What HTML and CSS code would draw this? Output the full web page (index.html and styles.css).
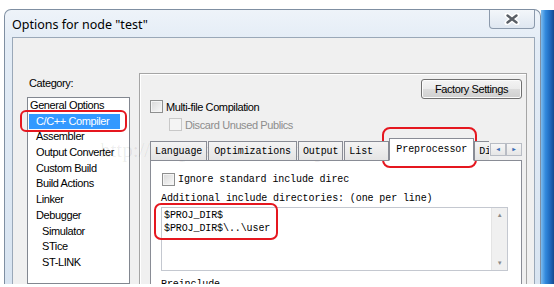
FILE: index.html
```html
<!DOCTYPE html>
<html lang="en">
<head>
    <meta charset="UTF-8">
    <title>Options for node "test"</title>
    <link rel="stylesheet" href="styles.css">
</head>
<body>
    <div class="screen">
        <div class="desktop">
            <div class="window">
                <div class="titlebar">
                    <span class="title">Options for node "test"</span>
                    <div class="close">
                        <svg width="16" height="12" viewBox="0 0 16 12">
                            <path d="M3 2 L13 10 M13 2 L3 10" stroke="#fff" stroke-width="5" stroke-linecap="round"/>
                            <path d="M3.5 2.5 L12.5 9.5 M12.5 2.5 L3.5 9.5" stroke="#5a5f66" stroke-width="2.4" stroke-linecap="round"/>
                        </svg>
                    </div>
                </div>

                <div class="client">
                    <!-- Category tree -->
                    <div class="category">
                        <div class="category-label">Category:</div>
                        <ul class="tree">
                            <li>General Options</li>
                            <li class="lvl1"><span class="selected">C/C++ Compiler</span></li>
                            <li class="lvl1">Assembler</li>
                            <li class="lvl1">Output Converter</li>
                            <li class="lvl1">Custom Build</li>
                            <li class="lvl1">Build Actions</li>
                            <li class="lvl1">Linker</li>
                            <li class="lvl1">Debugger</li>
                            <li class="lvl2">Simulator</li>
                            <li class="lvl2">STice</li>
                            <li class="lvl2">ST-LINK</li>
                        </ul>
                    </div>

                    <!-- Options panel -->
                    <div class="panel">
                        <div class="panel-top">
                            <div class="options">
                                <div class="check"><span class="box"></span>Multi-file Compilation</div>
                                <div class="check check-sub disabled"><span class="box"></span>Discard Unused Publics</div>
                            </div>
                            <div class="button">Factory Settings</div>
                        </div>

                        <div class="tabs">
                            <div class="tab-track">
                                <div class="tab">Language</div>
                                <div class="tab tab-wide">Optimizations</div>
                                <div class="tab">Output</div>
                                <div class="tab">List</div>
                                <div class="tab tab-active">Preprocessor</div>
                                <div class="tab">Diagnostics</div>
                            </div>
                            <div class="tab-arrows">
                                <span class="arrow">&#9664;</span>
                                <span class="arrow">&#9654;</span>
                            </div>
                        </div>

                        <div class="tab-page">
                            <div class="check mono"><span class="box"></span>Ignore standard include direc</div>
                            <div class="field-label mono">Additional include directories: (one per line)</div>
                            <div class="textbox">
                                <div class="textbox-text mono">$PROJ_DIR$<br>$PROJ_DIR$\..\user</div>
                                <div class="scrollbar">
                                    <span class="scroll-arrow">&#9650;</span>
                                    <span class="scroll-arrow">&#9660;</span>
                                </div>
                            </div>
                            <div class="field-label mono">Preinclude</div>
                        </div>
                    </div>
                </div>
            </div>
            <div class="backdrop"></div>
        </div>

        <!-- annotations drawn over the capture -->
        <div class="watermark">http://blog.csdn.net/liming3854</div>
        <div class="mark mark-tree"></div>
        <div class="mark mark-tab"></div>
        <div class="mark mark-text"></div>
    </div>
</body>
</html>
```

FILE: styles.css
```css
body {
    margin: 0;
    background: #fff;
    font-family: "Liberation Sans", Arial, sans-serif;
    font-size: 11px;
    letter-spacing: -0.4px;
    color: #000;
}
.screen {
    position: relative;
    width: 554px;
    height: 287px;
    overflow: hidden;
    background: #fff;
}
.desktop {
    display: flex;
    height: 275px;
    margin-top: 9px;
}
.window {
    box-sizing: border-box;
    width: 537px;
    margin-left: 4px;
    display: flex;
    flex-direction: column;
    padding: 0 5px 0 7px;
    border: 1px solid #7f8fa2;
    border-bottom: none;
    border-radius: 7px 7px 0 0;
    background: linear-gradient(to bottom, #eef3f9 0%, #e3ecf6 12%, #d8e4f1 100%);
}
.titlebar {
    flex: none;
    height: 27px;
    display: flex;
    align-items: center;
    justify-content: space-between;
}
.title {
    font-family: "Noto Sans", sans-serif;
    font-size: 12.5px;
    letter-spacing: 0;
    margin-top: 2px;
}
.close {
    align-self: flex-start;
    width: 44px;
    height: 18px;
    display: flex;
    align-items: center;
    justify-content: center;
    border: 1px solid #8c9aac;
    border-top: none;
    border-radius: 0 0 4px 4px;
    background: linear-gradient(to bottom, #f3f6fa, #dfe7f1);
}
.client {
    flex: 1;
    min-height: 0;
    overflow: hidden;
    display: flex;
    background: #f0f0f0;
    border: 1px solid #9aa8b8;
    border-bottom: none;
}
.backdrop {
    flex: 1;
    margin-top: 1px;
    background: linear-gradient(to right, #7cbcf0 0%, #3289dc 35%, #1c64b8 75%, #154a8e 100%);
}

/* category tree */
.category {
    display: flex;
    flex-direction: column;
    padding: 39px 0 0 14px;
}
.category-label {
    height: 12px;
    line-height: 12px;
    margin: 0 0 8px 2px;
}
.tree {
    flex: 1;
    box-sizing: border-box;
    width: 103px;
    margin: 0;
    padding: 0;
    list-style: none;
    background: #fff;
    border: 1px solid #828790;
}
.tree li {
    height: 15.7px;
    line-height: 15.7px;
    padding-left: 2px;
    white-space: nowrap;
}
.tree .lvl1 {
    padding-left: 8px;
}
.tree .lvl2 {
    padding-left: 14px;
}
.selected {
    display: inline-block;
    margin-left: -7px;
    padding: 0 11px 0 7px;
    background: #3399ff;
    color: #fff;
}

/* right panel */
.panel {
    box-sizing: border-box;
    width: 388px;
    margin: 35px 0 0 9px;
    display: flex;
    flex-direction: column;
    border: 1px solid #a5a5a5;
    border-bottom: none;
    box-shadow: inset 1px 1px 0 #fff;
}
.panel-top {
    flex: none;
    display: flex;
    justify-content: space-between;
    height: 57px;
    padding: 0 4px 0 10px;
}
.options {
    display: flex;
    flex-direction: column;
    gap: 5px;
    padding-top: 26px;
}
.check {
    flex: none;
    display: flex;
    align-items: center;
    height: 13px;
    white-space: nowrap;
}
.check-sub {
    margin-left: 19px;
}
.box {
    box-sizing: border-box;
    flex: none;
    width: 13px;
    height: 13px;
    margin-right: 3px;
    border: 1px solid #8e8f8f;
    background: linear-gradient(135deg, #d8d8d8, #f9f9f9);
    box-shadow: inset 0 0 0 1px #f4f4f4;
}
.disabled {
    color: #8d8d8d;
}
.disabled .box {
    border-color: #c8c8c8;
    background: #f4f4f4;
}
.button {
    box-sizing: border-box;
    width: 101px;
    height: 20px;
    margin-top: 5px;
    line-height: 18px;
    text-align: center;
    border: 1px solid #707070;
    border-radius: 3px;
    background: linear-gradient(to bottom, #f4f4f4 0%, #ebebeb 50%, #dcdcdc 51%, #cfcfcf 100%);
    box-shadow: inset 0 0 0 1px #fbfbfb;
}

/* tabs */
.mono,
.tabs {
    font-family: "Liberation Mono", "Courier New", monospace;
    font-size: 10px;
    letter-spacing: -0.1px;
}
.tabs {
    flex: none;
    display: flex;
    align-items: flex-end;
    height: 22px;
    margin: 7px 4px 0 10px;
}
.tab-track {
    flex: 1;
    display: flex;
    align-items: flex-end;
    gap: 1px;
    overflow: hidden;
    height: 23px;
    margin-bottom: -1px;
    position: relative;
    z-index: 1;
}
.tab {
    box-sizing: border-box;
    flex: none;
    min-width: 45px;
    height: 20px;
    line-height: 19px;
    padding: 0 4px;
    border: 1px solid #898c95;
    background: linear-gradient(to bottom, #f4f4f4, #e4e4e4);
    white-space: nowrap;
}
.tab-wide {
    padding: 0 5px;
}
.tab-active {
    height: 23px;
    line-height: 21px;
    margin: 0 -1px 0 -1px;
    padding: 0 6px;
    background: #fff;
    border-bottom-color: #fff;
}
.tab-arrows {
    display: flex;
    margin: 0 0 4px 1px;
}
.arrow {
    box-sizing: border-box;
    width: 16px;
    height: 13px;
    line-height: 11px;
    font-size: 6px;
    text-align: center;
    color: #3b6fb6;
    border: 1px solid #b8bcc4;
    background: linear-gradient(to bottom, #f6f6f6, #e6e6e6);
}

/* tab page */
.tab-page {
    flex: 1;
    box-sizing: border-box;
    margin: 0 4px 0 10px;
    padding: 12px 13px 0 10px;
    background: #fff;
    border: 1px solid #898c95;
    border-bottom: none;
}
.tab-page .check {
    margin-left: 1px;
}
.field-label {
    height: 12px;
    line-height: 12px;
    margin-top: 7px;
    white-space: nowrap;
}
.textbox {
    display: flex;
    height: 64px;
    margin-top: 2px;
    border: 1px solid #c4c8d0;
    box-sizing: border-box;
}
.textbox-text {
    flex: 1;
    padding: 1px 2px;
    line-height: 13px;
}
.scrollbar {
    width: 15px;
    display: flex;
    flex-direction: column;
    justify-content: space-between;
    align-items: center;
    padding: 4px 0;
    background: #f0f0f0;
    border-left: 1px solid #e4e4e4;
}
.scroll-arrow {
    font-size: 6px;
    color: #8a8a8a;
}
.textbox + .field-label {
    margin-top: 8px;
}

/* overlays */
.watermark {
    position: absolute;
    left: 100px;
    top: 138px;
    font-family: "Liberation Serif", serif;
    font-size: 21px;
    letter-spacing: 0;
    color: rgba(0, 0, 0, 0.08);
    white-space: nowrap;
    pointer-events: none;
}
.mark {
    position: absolute;
    box-sizing: border-box;
    border: 2px solid #e5171f;
    border-radius: 6px;
}
.mark-tree {
    left: 20px;
    top: 110px;
    width: 107px;
    height: 22px;
}
.mark-tab {
    left: 382px;
    top: 127px;
    width: 95px;
    height: 41px;
    border-radius: 8px;
}
.mark-text {
    left: 154px;
    top: 203px;
    width: 124px;
    height: 37px;
    border-radius: 7px;
}
```
